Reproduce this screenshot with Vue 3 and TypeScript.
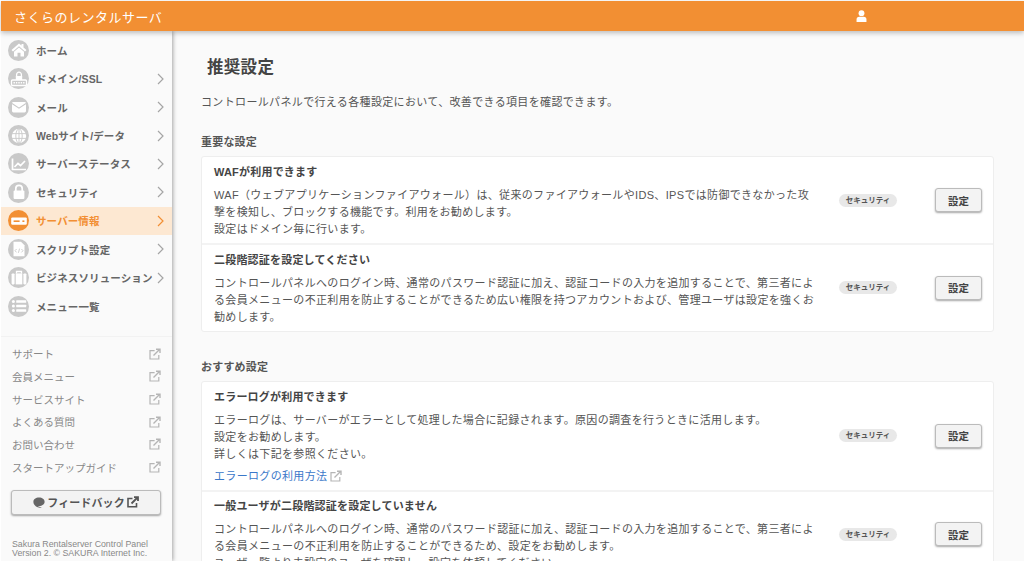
<template>
  <div class="page">
    <header class="topbar">
      <div class="brand">さくらのレンタルサーバ</div>
      <svg class="user" viewBox="0 0 12 13" width="11" height="12"><circle cx="6" cy="3.4" r="3.2" fill="#fff" /><path d="M0.6 13 V10.2 Q0.6 7.2 3.6 7.2 H8.4 Q11.4 7.2 11.4 10.2 V13 Z" fill="#fff" /></svg>
    </header>
    <div class="body">
      <aside class="side">
        <nav class="menu">
          <div v-for="m in menu" :key="m.label" :class="['menu-row', { active: m.active }]">
            <span class="disc">
              <svg viewBox="0 0 20 20" width="20" height="20" v-html="m.icon"></svg>
            </span>
            <span class="menu-label">{{ m.label }}</span>
            <svg v-if="m.arrow" class="chev" viewBox="0 0 7 12" width="7" height="12"><path d="M1 1 L6 6 L1 11" fill="none" stroke="currentColor" stroke-width="1.2" /></svg>
          </div>
        </nav>
        <div class="links">
          <div v-for="l in links" :key="l" class="link-row">
            <span>{{ l }}</span>
            <svg class="ext" viewBox="0 0 12 12" width="12" height="12" v-html="extIcon"></svg>
          </div>
        </div>
        <button class="feedback">
          <svg viewBox="0 0 12 11" width="12" height="11"><path d="M6 0.5 C9.2 0.5 11.6 2.2 11.6 4.8 C11.6 7.4 9.2 9 6 9 L4.6 9 L9 10.8 C6 10.8 3 10.2 1.8 8.2 C0.9 7.4 0.4 6.2 0.4 4.8 C0.4 2.2 2.8 0.5 6 0.5 Z" fill="#666" /></svg>
          <span>フィードバック</span>
          <svg viewBox="0 0 12 12" width="12" height="12" v-html="extIconBold"></svg>
        </button>
        <p class="copy">Sakura Rentalserver Control Panel<br />Version 2. © SAKURA Internet Inc.</p>
      </aside>
      <main class="main">
        <h1>推奨設定</h1>
        <p class="lead">コントロールパネルで行える各種設定において、改善できる項目を確認できます。</p>
        <section v-for="s in sections" :key="s.title" class="group">
          <h2>{{ s.title }}</h2>
          <div class="card">
            <div v-for="r in s.rows" :key="r.title" class="row">
              <div class="row-text">
                <h3>{{ r.title }}</h3>
                <p v-for="(t, i) in r.lines" :key="i">{{ t }}</p>
                <a v-if="r.link" class="doc-link">{{ r.link }}<svg class="ext" viewBox="0 0 12 12" width="12" height="12" v-html="extIcon"></svg></a>
              </div>
              <span class="tag">セキュリティ</span>
              <button class="set-btn">設定</button>
            </div>
          </div>
        </section>
      </main>
    </div>
  </div>
</template>

<script setup lang="ts">
interface MenuItem {
  label: string
  icon: string
  arrow: boolean
  active?: boolean
}

interface Row {
  title: string
  lines: string[]
  link?: string
}

const extIcon = '<path d="M9.8 7 V11 H1 V2.6 H5.6" fill="none" stroke="currentColor" stroke-width="1.2"/><path d="M4.5 7.5 L10 2 M7 1.2 H11 V5" fill="none" stroke="currentColor" stroke-width="1.4"/>'
const extIconBold = '<path d="M9.5 7 V10.7 H1 V2.5 H5.5" fill="none" stroke="#555" stroke-width="1.6"/><path d="M4.5 7.5 L10 2 M7 1.2 H11 V5" fill="none" stroke="#555" stroke-width="1.8"/>'

const menu: MenuItem[] = [
  { label: 'ホーム', arrow: false, icon: '<path d="M10 3.5 L2.5 10 L4 11.4 L10 6.2 L16 11.4 L17.5 10 L14.5 7.4 V4 H12.5 V5.6 Z M10 7.4 L5 11.8 V16.5 H8.5 V12.8 H11.5 V16.5 H15 V11.8 Z" fill="#fff"/>' },
  { label: 'ドメイン/SSL', arrow: true, icon: '<path d="M7.6 8 V5.6 a2.4 2.4 0 0 1 4.8 0 V8" fill="none" stroke="#fff" stroke-width="1.3"/><rect x="6.8" y="7" width="6.4" height="4" fill="#fff"/><rect x="2.5" y="11" width="15" height="5.5" rx="1" fill="none" stroke="#fff" stroke-width="1.3"/><path d="M4.5 13.7 H15.5" stroke="#fff" stroke-width="1.4" stroke-dasharray="1.4 1"/>' },
  { label: 'メール', arrow: true, icon: '<rect x="3" y="5" width="14" height="10.5" rx="1.4" fill="#fff"/><path d="M3 6.5 L10 11.2 L17 6.5" fill="none" stroke="#c9c9c9" stroke-width="1.1"/>' },
  { label: 'Webサイト/データ', arrow: true, icon: '<circle cx="10" cy="10" r="7.2" fill="#fff"/><g fill="none" stroke="#c9c9c9" stroke-width="0.9"><ellipse cx="10" cy="10" rx="3.2" ry="7.2"/><path d="M10 2.8 V17.2 M3 7.6 H17 M3 12.4 H17"/></g>' },
  { label: 'サーバーステータス', arrow: true, icon: '<path d="M3.5 4.5 V15.5 H17" fill="none" stroke="#fff" stroke-width="1.7"/><path d="M5.5 13 L9 9.5 L11.5 11.5 L16 7" fill="none" stroke="#fff" stroke-width="1.7"/>' },
  { label: 'セキュリティ', arrow: true, icon: '<path d="M6.8 9 V6.6 a3.2 3.2 0 0 1 6.4 0 V9" fill="none" stroke="#fff" stroke-width="1.7"/><rect x="4.6" y="8.6" width="10.8" height="8.4" rx="1" fill="#fff"/>' },
  { label: 'サーバー情報', arrow: true, active: true, icon: '<rect x="2.2" y="6.4" width="15.6" height="7.4" rx="1.2" fill="#fff"/><rect x="4.6" y="9.4" width="6" height="1.6" fill="#f28f33"/><rect x="13.4" y="9.4" width="2" height="1.6" fill="#f28f33"/>' },
  { label: 'スクリプト設定', arrow: true, icon: '<path d="M4.5 2.8 H12 L15.5 6.3 V17.2 H4.5 Z" fill="#fff"/><path d="M7.6 10 L6 11.7 L7.6 13.4 M12.4 10 L14 11.7 L12.4 13.4 M10.6 9.6 L9.4 13.8" fill="none" stroke="#c9c9c9" stroke-width="0.9"/>' },
  { label: 'ビジネスソリューション', arrow: true, icon: '<path d="M7.5 5.5 V3.5 H12.5 V5.5" fill="none" stroke="#fff" stroke-width="1.3"/><rect x="2.6" y="5.4" width="3" height="11" rx="0.8" fill="#fff"/><rect x="6.7" y="5.4" width="6.6" height="11" fill="#fff"/><rect x="14.4" y="5.4" width="3" height="11" rx="0.8" fill="#fff"/>' },
  { label: 'メニュー一覧', arrow: false, icon: '<g fill="#fff"><circle cx="4.4" cy="5.5" r="1.5"/><circle cx="4.4" cy="10" r="1.5"/><circle cx="4.4" cy="14.5" r="1.5"/><rect x="7.2" y="4.2" width="10" height="2.6" rx="0.6"/><rect x="7.2" y="8.7" width="10" height="2.6" rx="0.6"/><rect x="7.2" y="13.2" width="10" height="2.6" rx="0.6"/></g>' }
]

const links = ['サポート', '会員メニュー', 'サービスサイト', 'よくある質問', 'お問い合わせ', 'スタートアップガイド']

const sections: { title: string; rows: Row[] }[] = [
  {
    title: '重要な設定',
    rows: [
      {
        title: 'WAFが利用できます',
        lines: [
          'WAF（ウェブアプリケーションファイアウォール）は、従来のファイアウォールやIDS、IPSでは防御できなかった攻撃を検知し、ブロックする機能です。利用をお勧めします。',
          '設定はドメイン毎に行います。'
        ]
      },
      {
        title: '二段階認証を設定してください',
        lines: ['コントロールパネルへのログイン時、通常のパスワード認証に加え、認証コードの入力を追加することで、第三者による会員メニューの不正利用を防止することができるため広い権限を持つアカウントおよび、管理ユーザは設定を強くお勧めします。']
      }
    ]
  },
  {
    title: 'おすすめ設定',
    rows: [
      {
        title: 'エラーログが利用できます',
        lines: ['エラーログは、サーバーがエラーとして処理した場合に記録されます。原因の調査を行うときに活用します。', '設定をお勧めします。', '詳しくは下記を参照ください。'],
        link: 'エラーログの利用方法'
      },
      {
        title: '一般ユーザが二段階認証を設定していません',
        lines: ['コントロールパネルへのログイン時、通常のパスワード認証に加え、認証コードの入力を追加することで、第三者による会員メニューの不正利用を防止することができるため、設定をお勧めします。', 'ユーザ一覧より未設定のユーザを確認し、設定を依頼してください。']
      }
    ]
  }
]
</script>

<style>
html, body {
  margin: 0;
  background: #fff;
  overflow: hidden;
}
</style>

<style scoped>
.page {
  width: 1024px;
  height: 571px;
  overflow: hidden;
  display: flex;
  flex-direction: column;
  font-family: "Liberation Sans", "Noto Sans CJK JP", sans-serif;
  color: #444;
  box-sizing: border-box;
  padding: 1px 0 10px 1px;
}

.topbar {
  flex: none;
  height: 30px;
  background: #f28f33;
  box-shadow: 0 2px 5px rgba(0, 0, 0, 0.25);
  display: flex;
  align-items: center;
  padding-left: 13px;
  position: relative;
  z-index: 2;
}

.brand {
  color: #fff;
  font-size: 13px;
  letter-spacing: 0.5px;
  width: 842px;
}

.body {
  flex: 1;
  display: flex;
  min-height: 0;
  overflow: hidden;
  background: #fafafa;
}

.side {
  flex: none;
  width: 171px;
  background: #fafafa;
  box-shadow: 1px 0 4px rgba(0, 0, 0, 0.35);
  display: flex;
  flex-direction: column;
  position: relative;
  z-index: 1;
  box-sizing: border-box;
  padding-top: 5px;
}

.menu {
  padding-bottom: 16px;
  border-bottom: 1px solid #f2f2f2;
}

.menu-row {
  height: 28.44px;
  display: flex;
  align-items: center;
  padding: 0 7px;
  color: #666;
  font-size: 10.5px;
  font-weight: 700;
  letter-spacing: 0.12px;
}

.menu-row.active {
  background: #fde8d2;
  color: #f28f33;
}

.disc {
  width: 21px;
  height: 21px;
  border-radius: 50%;
  background: #c9c9c9;
  display: flex;
  align-items: center;
  justify-content: center;
  flex: none;
  margin-right: 7px;
}

.active .disc {
  background: #f28f33;
}

.menu-label {
  flex: 1;
  white-space: nowrap;
}

.chev {
  color: #a5a5a5;
  margin-right: 1px;
  flex: none;
}

.active .chev {
  color: #f28f33;
}

.links {
  padding: 5px 11px 0 11px;
}

.link-row {
  height: 22.7px;
  display: flex;
  align-items: center;
  justify-content: space-between;
  font-size: 10.5px;
  color: #888;
}

.ext {
  color: #b5b5b5;
  flex: none;
}

.feedback {
  margin: 11px 11px 0 10px;
  height: 25px;
  border: 1px solid #bbb;
  border-radius: 3px;
  background: #f3f3f3;
  box-shadow: 0 1px 2px rgba(0, 0, 0, 0.35);
  display: flex;
  align-items: center;
  justify-content: center;
  gap: 2px;
  font-family: inherit;
  font-size: 11px;
  font-weight: 700;
  color: #555;
  letter-spacing: 0.1px;
}

.copy {
  margin: 25px 0 0 11px;
  font-size: 8.8px;
  line-height: 9px;
  color: #888;
  white-space: nowrap;
}

.main {
  flex: 1;
  min-width: 0;
  padding: 0 30px 0 29px;
  background: #fafafa;
}

h1 {
  margin: 24px 0 0 6px;
  font-size: 16.5px;
  line-height: 24px;
  font-weight: 700;
  color: #444;
  letter-spacing: 0.3px;
}

.lead {
  margin: 15px 0 0;
  font-size: 11px;
  line-height: 16px;
  letter-spacing: 0.35px;
  color: #555;
}

.group h2 {
  margin: 24px 0 0;
  font-size: 11px;
  line-height: 16px;
  font-weight: 700;
  color: #555;
  letter-spacing: 0.2px;
}

.group + .group h2 {
  margin-top: 27px;
}

.card {
  margin-top: 6px;
  background: #fff;
  border: 1px solid #eee;
  border-radius: 3px;
}

.row {
  display: flex;
  align-items: center;
  padding: 0 11px 0 12px;
  border-bottom: 2px solid #f3f3f3;
}

.row:last-child {
  border-bottom: 0;
}

.row-text {
  width: 602px;
  flex: none;
  padding: 7px 0 5px;
}

.row + .row .row-text {
  padding-top: 6.5px;
}

h3 {
  margin: 0 0 7px;
  font-size: 11px;
  line-height: 16px;
  font-weight: 700;
  color: #444;
  letter-spacing: 0.2px;
}

.row-text p {
  margin: 0;
  font-size: 11px;
  line-height: 17px;
  letter-spacing: 0.33px;
  color: #555;
}

.doc-link {
  display: flex;
  align-items: center;
  gap: 3px;
  margin: 5px 0 1px;
  font-size: 11px;
  line-height: 16px;
  color: #3b78c9;
  letter-spacing: 0.33px;
}

.tag {
  margin-left: 23px;
  flex: none;
  width: 58px;
  height: 13px;
  border-radius: 7px;
  background: #e8e8e8;
  font-size: 7.5px;
  font-weight: 700;
  line-height: 13px;
  text-align: center;
  color: #555;
  white-space: nowrap;
}

.set-btn {
  margin-left: auto;
  flex: none;
  width: 47px;
  height: 24px;
  border: 1px solid #bbb;
  border-radius: 3px;
  background: #f3f3f3;
  box-shadow: 0 1px 2px rgba(0, 0, 0, 0.35);
  font-family: inherit;
  font-size: 10.5px;
  font-weight: 700;
  color: #444;
  padding: 0;
}
</style>
